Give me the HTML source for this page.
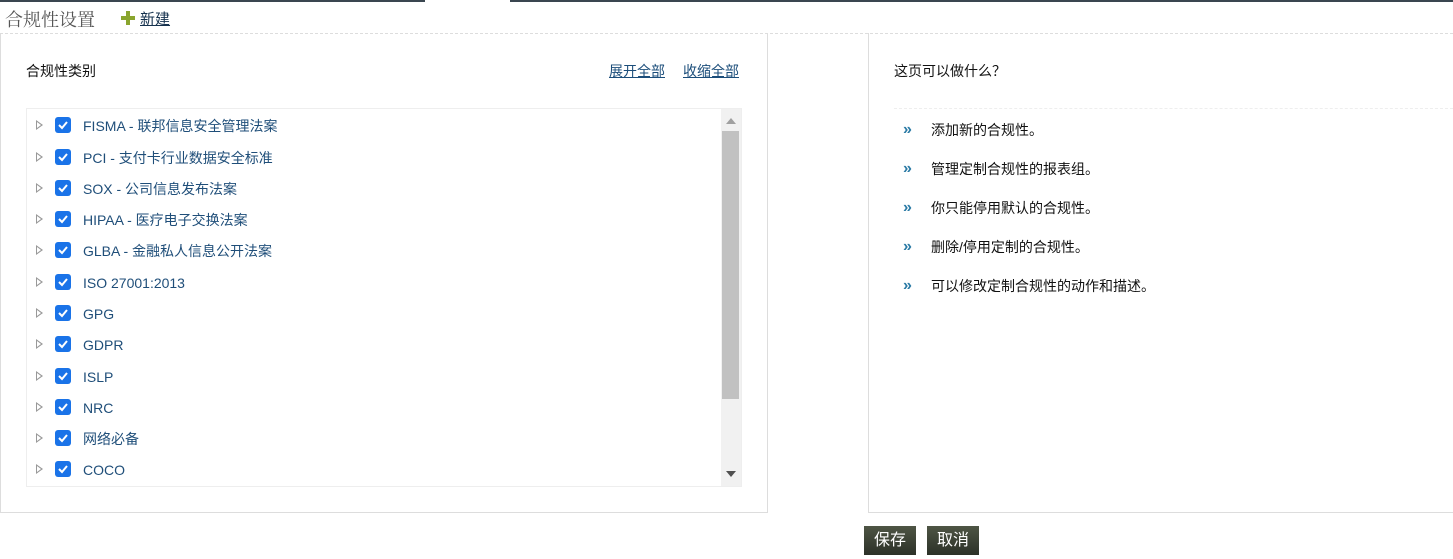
<!DOCTYPE html>
<html><head><meta charset="utf-8"><style>
*{margin:0;padding:0;box-sizing:border-box}
body{width:1453px;height:559px;background:#fff;font-family:"Liberation Sans","Noto Sans CJK SC",sans-serif;position:relative;overflow:hidden}
.topl{position:absolute;top:0;height:2px;background:#3a4650}
.hdr{position:absolute;left:5px;top:6px;font-size:18px;color:#555;font-family:"Liberation Serif","Noto Serif CJK SC",serif}
.new{position:absolute;left:121px;top:8px;font-size:15px;color:#16324e;text-decoration:underline}
.plus{position:absolute;left:121px;top:11px;width:14px;height:14px}
.plus:before{content:"";position:absolute;left:5px;top:0;width:4px;height:14px;background:#8aa52e}
.plus:after{content:"";position:absolute;left:0;top:5px;width:14px;height:4px;background:#8aa52e}
.dash{position:absolute;left:0;right:0;top:33px;border-top:1px dashed #ddd}
.panel{position:absolute;top:33px;height:480px;border:1px solid #ddd;border-top:none}
.t{position:absolute;font-size:14px;color:#111}
.lnk{position:absolute;top:61px;font-size:14px;color:#1b4d7a;text-decoration:underline}
.box{position:absolute;left:26px;top:108px;width:716px;height:379px;border:1px solid #eee}
.row{position:absolute;left:0;height:20px;line-height:20px;font-size:14px;color:#1f4e79;white-space:nowrap}
.tri{position:absolute;left:9px;top:5px;width:0;height:0;border-left:7px solid #999;border-top:5px solid transparent;border-bottom:5px solid transparent}
.tri:after{content:"";position:absolute;left:-6px;top:-3px;border-left:4px solid #fff;border-top:3px solid transparent;border-bottom:3px solid transparent}
.cb{position:absolute;left:28px;top:2px;width:16px;height:16px;background:#1a73e8;border-radius:3px}
.cb svg{position:absolute;left:2px;top:2px}
.lab{position:absolute;left:56px;top:1px}
.sb{position:absolute;right:0;top:0;width:20px;height:377px;background:#f1f1f1}
.th{position:absolute;left:1px;top:22px;width:17px;height:268px;background:#c1c1c1}
.li{position:absolute;left:931px;font-size:14px;color:#111}
.ar{position:absolute;left:903px;font-size:16px;font-weight:bold;color:#2a7aa5;letter-spacing:-1px}
.btn{position:absolute;top:526px;height:29px;background:linear-gradient(#4e5545,#2c3128);color:#fff;font-size:16px;text-align:center;line-height:29px}
</style></head><body>
<div class="topl" style="left:0;width:425px"></div>
<div class="topl" style="left:510px;right:0"></div>
<div class="hdr">合规性设置</div>
<div class="plus"></div>
<div class="new" style="left:140px">新建</div>
<div class="dash"></div>
<div class="panel" style="left:0;width:768px"></div>
<div class="panel" style="left:868px;width:600px"></div>
<div class="t" style="left:26px;top:61px">合规性类别</div>
<div class="lnk" style="left:609px">展开全部</div>
<div class="lnk" style="left:683px">收缩全部</div>
<div class="box">
<div class="row" style="top:6px"><i class="tri"></i><span class="cb"><svg width="12" height="12"><path d="M2 6l3 3 5-6" stroke="#fff" stroke-width="2" fill="none"/></svg></span><span class="lab">FISMA - 联邦信息安全管理法案</span></div>
<div class="row" style="top:38px"><i class="tri"></i><span class="cb"><svg width="12" height="12"><path d="M2 6l3 3 5-6" stroke="#fff" stroke-width="2" fill="none"/></svg></span><span class="lab">PCI - 支付卡行业数据安全标准</span></div>
<div class="row" style="top:69px"><i class="tri"></i><span class="cb"><svg width="12" height="12"><path d="M2 6l3 3 5-6" stroke="#fff" stroke-width="2" fill="none"/></svg></span><span class="lab">SOX - 公司信息发布法案</span></div>
<div class="row" style="top:100px"><i class="tri"></i><span class="cb"><svg width="12" height="12"><path d="M2 6l3 3 5-6" stroke="#fff" stroke-width="2" fill="none"/></svg></span><span class="lab">HIPAA - 医疗电子交换法案</span></div>
<div class="row" style="top:131px"><i class="tri"></i><span class="cb"><svg width="12" height="12"><path d="M2 6l3 3 5-6" stroke="#fff" stroke-width="2" fill="none"/></svg></span><span class="lab">GLBA - 金融私人信息公开法案</span></div>
<div class="row" style="top:163px"><i class="tri"></i><span class="cb"><svg width="12" height="12"><path d="M2 6l3 3 5-6" stroke="#fff" stroke-width="2" fill="none"/></svg></span><span class="lab">ISO 27001:2013</span></div>
<div class="row" style="top:194px"><i class="tri"></i><span class="cb"><svg width="12" height="12"><path d="M2 6l3 3 5-6" stroke="#fff" stroke-width="2" fill="none"/></svg></span><span class="lab">GPG</span></div>
<div class="row" style="top:225px"><i class="tri"></i><span class="cb"><svg width="12" height="12"><path d="M2 6l3 3 5-6" stroke="#fff" stroke-width="2" fill="none"/></svg></span><span class="lab">GDPR</span></div>
<div class="row" style="top:257px"><i class="tri"></i><span class="cb"><svg width="12" height="12"><path d="M2 6l3 3 5-6" stroke="#fff" stroke-width="2" fill="none"/></svg></span><span class="lab">ISLP</span></div>
<div class="row" style="top:288px"><i class="tri"></i><span class="cb"><svg width="12" height="12"><path d="M2 6l3 3 5-6" stroke="#fff" stroke-width="2" fill="none"/></svg></span><span class="lab">NRC</span></div>
<div class="row" style="top:319px"><i class="tri"></i><span class="cb"><svg width="12" height="12"><path d="M2 6l3 3 5-6" stroke="#fff" stroke-width="2" fill="none"/></svg></span><span class="lab">网络必备</span></div>
<div class="row" style="top:350px"><i class="tri"></i><span class="cb"><svg width="12" height="12"><path d="M2 6l3 3 5-6" stroke="#fff" stroke-width="2" fill="none"/></svg></span><span class="lab">COCO</span></div>
<div class="sb"><svg style="position:absolute;left:5px;top:9px" width="10" height="6"><path d="M0 6L5 0 10 6z" fill="#a0a0a0"/></svg><div class="th"></div><svg style="position:absolute;left:5px;top:362px" width="10" height="6"><path d="M0 0L10 0 5 6z" fill="#505050"/></svg></div>
</div>
<div class="t" style="left:894px;top:61px">这页可以做什么？</div>
<div style="position:absolute;left:894px;right:0;top:108px;border-top:1px dashed #eee"></div>
<div class="ar" style="top:121px">»</div><div class="li" style="top:120px">添加新的合规性。</div>
<div class="ar" style="top:160px">»</div><div class="li" style="top:159px">管理定制合规性的报表组。</div>
<div class="ar" style="top:199px">»</div><div class="li" style="top:198px">你只能停用默认的合规性。</div>
<div class="ar" style="top:238px">»</div><div class="li" style="top:237px">删除/停用定制的合规性。</div>
<div class="ar" style="top:277px">»</div><div class="li" style="top:276px">可以修改定制合规性的动作和描述。</div>
<div class="btn" style="left:864px;width:52px">保存</div>
<div class="btn" style="left:927px;width:52px">取消</div>
</body></html>
